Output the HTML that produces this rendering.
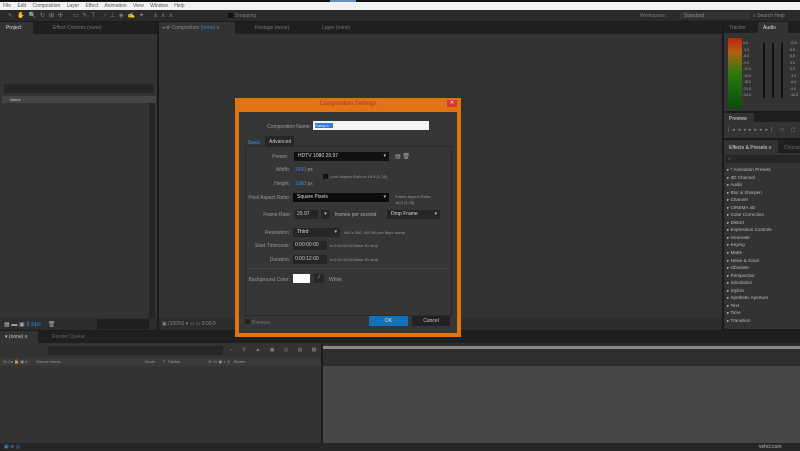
<!DOCTYPE html>
<html><head><meta charset="utf-8"><style>
*{margin:0;padding:0;box-sizing:border-box}
body{width:800px;height:451px;overflow:hidden;background:#1b1b1b;font-family:"Liberation Sans",sans-serif;font-size:5px;color:#aaa;position:relative}
div,span{position:absolute}
.p{background:#333}
.t{white-space:nowrap}
.dd{background:#111;color:#ddd;padding-left:4px;line-height:9px}
.dd:after{content:"▾";position:absolute;right:3px;top:0;color:#ccc}
.lbl{color:#999;text-align:right;white-space:nowrap}
.fx{left:727px;color:#bbb;white-space:nowrap}
</style></head><body>
<!-- menu -->
<div style="left:0;top:0;width:800px;height:2px;background:#111"></div>
<div style="left:0;top:2px;width:800px;height:8px;background:#f2f2f2"></div>
<div class="t" style="left:3px;top:3px;color:#555;word-spacing:5px;font-size:5px">File Edit Composition Layer Effect Animation View Window Help</div>
<div style="left:330px;top:0;width:26px;height:2px;background:#6a8fc0"></div>
<!-- toolbar -->
<div style="left:0;top:10px;width:800px;height:11px;background:#2a2a2a"></div>
<div class="t" style="left:8px;top:12px;color:#888;letter-spacing:4px;font-size:6px">↖✋🔍↻⊞✣ ▭✎T ∕⊥◈✍✦ ⅄⅄⅄</div>
<div style="left:228px;top:13px;width:5px;height:5px;background:#111"></div>
<div class="t" style="left:235px;top:13px;color:#777">Snapping</div>
<div class="t" style="left:640px;top:13px;color:#777">Workspace:</div>
<div style="left:680px;top:12px;width:70px;height:7px;background:#333"></div>
<div class="t" style="left:684px;top:13px;color:#888">Standard</div>
<div class="t" style="left:753px;top:13px;color:#888">⌕ Search Help</div>
<!-- project -->
<div style="left:0;top:22px;width:157px;height:12px;background:#1f1f1f"></div>
<div style="left:0;top:22px;width:33px;height:12px;background:#333"></div>
<div class="t" style="left:6px;top:25px;color:#ddd">Project</div>
<div class="t" style="left:53px;top:25px;color:#777">Effect Controls (none)</div>
<div class="p" style="left:0;top:34px;width:157px;height:284px"></div>
<div style="left:4px;top:84px;width:150px;height:9px;background:#262626"></div>
<div style="left:2px;top:96px;width:154px;height:7px;background:#444"></div>
<div class="t" style="left:10px;top:97px;color:#ccc;font-size:4px">Name</div>
<div style="left:149px;top:103px;width:6px;height:215px;background:#252525"></div>
<div style="left:0;top:318px;width:157px;height:12px;background:#2c2c2c"></div>
<div class="t" style="left:4px;top:321px;color:#aaa;font-size:6px">▦ ▬ ▣ <span style="position:static;color:#2a8ad4">8 bpc</span>&nbsp;&nbsp;&nbsp;&nbsp;🗑</div>
<div style="left:97px;top:319px;width:52px;height:10px;background:#1e1e1e"></div>
<!-- comp viewer -->
<div style="left:159px;top:22px;width:563px;height:12px;background:#1f1f1f"></div>
<div style="left:159px;top:22px;width:76px;height:12px;background:#333"></div>
<div class="t" style="left:162px;top:25px;color:#888">◂ ⊕ Composition <span style="position:static;color:#2a8ad4">(none)</span> ≡</div>
<div class="t" style="left:255px;top:25px;color:#777">Footage (none)</div>
<div class="t" style="left:322px;top:25px;color:#777">Layer (none)</div>
<div class="p" style="left:159px;top:34px;width:563px;height:296px;background:#323232"></div>
<div style="left:159px;top:318px;width:563px;height:12px;background:#2c2c2c"></div>
<div class="t" style="left:162px;top:321px;color:#888">▣ (100%) ▾ ▭ ▭ 0:00:0</div>
<!-- right -->
<div style="left:724px;top:22px;width:76px;height:11px;background:#1f1f1f"></div>
<div style="left:758px;top:22px;width:30px;height:11px;background:#333"></div>
<div class="t" style="left:729px;top:25px;color:#777">Tracker</div>
<div class="t" style="left:763px;top:25px;color:#ddd">Audio</div>
<div class="p" style="left:724px;top:33px;width:76px;height:78px"></div>
<div style="left:728px;top:38px;width:14px;height:71px;background:linear-gradient(#c02010,#b06010 20%,#2a7a10 50%,#0a4a08)"></div>
<div class="t" style="left:743px;top:40px;color:#aaa;font-size:3.5px;line-height:6.5px">0.0<br>-3.0<br>-6.0<br>-9.0<br>-12.0<br>-15.0<br>-18.0<br>-21.0<br>-24.0</div>
<div style="left:763px;top:43px;width:2px;height:55px;background:#111"></div>
<div style="left:772px;top:43px;width:2px;height:55px;background:#111"></div>
<div style="left:781px;top:43px;width:2px;height:55px;background:#111"></div>
<div class="t" style="left:790px;top:40px;color:#aaa;font-size:3.5px;line-height:6.5px">12.0<br>9.0<br>6.0<br>3.0<br>0.0<br>-3.0<br>-6.0<br>-9.0<br>-12.0</div>
<div style="left:724px;top:113px;width:76px;height:9px;background:#1f1f1f"></div>
<div style="left:724px;top:113px;width:30px;height:9px;background:#333"></div>
<div class="t" style="left:729px;top:116px;color:#ddd">Preview</div>
<div class="p" style="left:724px;top:122px;width:76px;height:16px"></div>
<div class="t" style="left:728px;top:127px;color:#888;letter-spacing:3px">|◂◂◂▸▸▸▸| ◁ ▢</div>
<div style="left:724px;top:140px;width:76px;height:13px;background:#1f1f1f"></div>
<div style="left:724px;top:140px;width:54px;height:13px;background:#333"></div>
<div class="t" style="left:729px;top:145px;color:#ddd">Effects &amp; Presets ≡</div>
<div class="t" style="left:784px;top:145px;color:#666">Charact</div>
<div class="p" style="left:724px;top:153px;width:76px;height:176px"></div>
<div style="left:725px;top:155px;width:75px;height:8px;background:#262626"></div>
<div class="t" style="left:728px;top:156px;color:#777">⌕</div>
<div class="fx" style="top:166px;line-height:7.55px;font-size:4.6px">▸ * Animation Presets<br>▸ 3D Channel<br>▸ Audio<br>▸ Blur &amp; Sharpen<br>▸ Channel<br>▸ CINEMA 4D<br>▸ Color Correction<br>▸ Distort<br>▸ Expression Controls<br>▸ Generate<br>▸ Keying<br>▸ Matte<br>▸ Noise &amp; Grain<br>▸ Obsolete<br>▸ Perspective<br>▸ Simulation<br>▸ Stylize<br>▸ Synthetic Aperture<br>▸ Text<br>▸ Time<br>▸ Transition</div>
<!-- timeline -->
<div style="left:0;top:331px;width:800px;height:12px;background:#1f1f1f"></div>
<div style="left:0;top:331px;width:38px;height:12px;background:#333"></div>
<div class="t" style="left:5px;top:334px;color:#ccc">▾ (none) ≡</div>
<div class="t" style="left:52px;top:334px;color:#666">Render Queue</div>
<div class="p" style="left:0;top:343px;width:322px;height:100px"></div>
<div style="left:48px;top:346px;width:175px;height:9px;background:#262626"></div>
<div class="t" style="left:230px;top:347px;color:#888;letter-spacing:4px;font-size:5px">⌐ ⚲ ▲ ▣ ◎ ▤ ▦</div>
<div style="left:0;top:358px;width:322px;height:8px;background:#3a3a3a"></div>
<div class="t" style="left:3px;top:359px;color:#999;font-size:4px">◎◁ ● 🔒 ▣ #&nbsp;&nbsp;&nbsp;&nbsp;&nbsp;&nbsp;&nbsp;&nbsp;Source Name</div>
<div class="t" style="left:145px;top:359px;color:#999;font-size:4px">Mode&nbsp;&nbsp;&nbsp;&nbsp;&nbsp;&nbsp;&nbsp;T&nbsp;&nbsp;TrkMat</div>
<div class="t" style="left:208px;top:359px;color:#999;font-size:4px">⊕ ⁄ fx ▣ ◐ ◎&nbsp;&nbsp;&nbsp;Parent</div>
<div style="left:321px;top:343px;width:2px;height:100px;background:#1b1b1b"></div>
<div style="left:323px;top:343px;width:477px;height:23px;background:#2e2e2e"></div>
<div style="left:323px;top:346px;width:477px;height:3px;background:#8a8a8a"></div>
<div style="left:323px;top:366px;width:477px;height:77px;background:#474747"></div>
<div style="left:0;top:443px;width:800px;height:8px;background:#262626"></div>
<div class="t" style="left:4px;top:444px;color:#3a8ad4;font-size:5px">▣ ⊕ ◎</div>
<div class="t" style="left:759px;top:444px;color:#bbb;font-size:5px">vehcl.com</div>
<!-- dialog -->
<div style="left:235px;top:98px;width:226px;height:239px;background:#e07412"></div>
<div class="t" style="left:235px;top:101px;width:226px;text-align:center;color:#b03808;font-size:6px">Composition Settings</div>
<div style="left:447px;top:100px;width:10px;height:7px;background:#d83a3a;color:#fff;font-size:5px;text-align:center;line-height:7px">✕</div>
<div style="left:239px;top:112px;width:218px;height:221px;background:#363636"></div>
<div class="lbl" style="left:240px;top:124px;width:71px">Composition Name:</div>
<div style="left:313px;top:121px;width:116px;height:9px;background:#f4f4f4"></div>
<div style="left:315px;top:123px;width:18px;height:5px;background:#2f7ad8;color:#fff;font-size:4px;line-height:5px">Comp 1</div>
<div style="left:245px;top:146px;width:207px;height:170px;border:1px solid #2a2a2a;background:#363636"></div>
<div class="t" style="left:248px;top:140px;color:#3a8ad4">Basic</div>
<div style="left:265px;top:136px;width:29px;height:10px;background:#262626"></div>
<div class="t" style="left:269px;top:139px;color:#ccc">Advanced</div>
<div class="lbl" style="left:240px;top:154px;width:48px">Preset:</div>
<div class="dd" style="left:294px;top:152px;width:95px;height:9px">HDTV 1080 29.97</div>
<div class="t" style="left:395px;top:153px;color:#aaa;font-size:6px">▤ 🗑</div>
<div class="lbl" style="left:240px;top:167px;width:50px">Width:</div>
<div class="t" style="left:295px;top:167px;color:#3a8ad4">1920 <span style="position:static;color:#999">px</span></div>
<div class="lbl" style="left:240px;top:181px;width:50px">Height:</div>
<div class="t" style="left:295px;top:181px;color:#3a8ad4">1080 <span style="position:static;color:#999">px</span></div>
<div style="left:323px;top:174px;width:5px;height:5px;background:#111"></div>
<div class="t" style="left:330px;top:174px;color:#999;font-size:4px">Lock Aspect Ratio to 16:9 (1.78)</div>
<div class="lbl" style="left:240px;top:195px;width:50px">Pixel Aspect Ratio:</div>
<div class="dd" style="left:293px;top:193px;width:96px;height:9px;background:#0c0c0c">Square Pixels</div>
<div class="t" style="left:395px;top:194px;color:#999;font-size:4px;line-height:6px">Frame Aspect Ratio:<br>16:9 (1.78)</div>
<div class="lbl" style="left:240px;top:212px;width:51px">Frame Rate:</div>
<div style="left:295px;top:210px;width:23px;height:9px;background:#262626;color:#ccc;padding-left:2px;line-height:9px">29.97</div>
<div style="left:321px;top:210px;width:9px;height:9px;background:#262626;color:#ccc;text-align:center;line-height:9px">▾</div>
<div class="t" style="left:335px;top:212px;color:#aaa">frames per second</div>
<div class="dd" style="left:387px;top:210px;width:53px;height:9px;background:#262626">Drop Frame</div>
<div class="lbl" style="left:240px;top:230px;width:50px">Resolution:</div>
<div class="dd" style="left:293px;top:228px;width:47px;height:9px;background:#262626">Third</div>
<div class="t" style="left:344px;top:230px;color:#999;font-size:4px">640 x 360, 900 KB per 8bpc frame</div>
<div class="lbl" style="left:240px;top:243px;width:50px">Start Timecode:</div>
<div style="left:293px;top:241px;width:34px;height:9px;background:#262626;color:#ccc;padding-left:2px;line-height:9px">0:00:00:00</div>
<div class="t" style="left:330px;top:243px;color:#999;font-size:4px">is 0:00:00:00 Base 30 drop</div>
<div class="lbl" style="left:240px;top:257px;width:50px">Duration:</div>
<div style="left:293px;top:255px;width:34px;height:9px;background:#262626;color:#ccc;padding-left:2px;line-height:9px">0:00:12:00</div>
<div class="t" style="left:330px;top:257px;color:#999;font-size:4px">is 0:00:12:00 Base 30 drop</div>
<div style="left:248px;top:268px;width:200px;height:1px;background:#444"></div>
<div class="lbl" style="left:240px;top:277px;width:50px">Background Color:</div>
<div style="left:293px;top:274px;width:17px;height:9px;background:#fff"></div>
<div style="left:314px;top:274px;width:10px;height:9px;background:#262626;color:#ccc;text-align:center;line-height:9px">⁄</div>
<div class="t" style="left:329px;top:277px;color:#999">White</div>
<div style="left:245px;top:319px;width:5px;height:5px;background:#222"></div>
<div class="t" style="left:252px;top:320px;color:#777">Preview</div>
<div style="left:369px;top:316px;width:39px;height:10px;background:#1473b8;color:#ddd;text-align:center;line-height:10px">OK</div>
<div style="left:412px;top:316px;width:38px;height:10px;background:#222;color:#ccc;text-align:center;line-height:10px">Cancel</div>
</body></html>
